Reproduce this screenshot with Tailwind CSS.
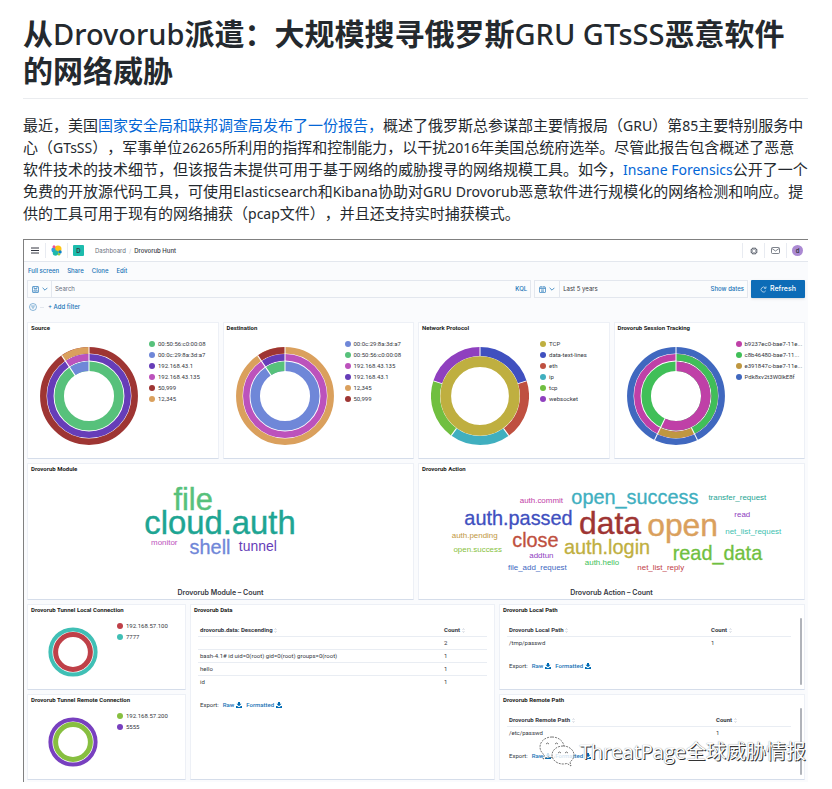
<!DOCTYPE html>
<html lang="zh-CN">
<head>
<meta charset="utf-8">
<meta name="viewport" content="width=device-width, initial-scale=1">
<title>从Drovorub派遣</title>
<script src="https://cdn.jsdelivr.net/npm/@tailwindcss/browser@4"></script>
</head>
<body class="bg-white pl-[23px] pr-6 pt-[15px] pb-2 text-[#24292e] font-['Noto_Sans','Noto_Sans_CJK_SC',sans-serif] [text-spacing-trim:space-all]">
<svg class="hidden" aria-hidden="true">
  <symbol id="dl" viewBox="0 0 12 12"><path d="M4 0h4v3.500h3L6 8.500 1 3.500h3z M0 8h2.500l2 2h3l2-2H12v4H0z" fill="#006bb4"/></symbol>
  <symbol id="sort" viewBox="0 0 6 10"><path d="M1 4l2-3 2 3M1 6l2 3 2-3" fill="none" stroke="#b5bccb"/></symbol>
  <symbol id="chev" viewBox="0 0 10 6"><path d="M1 1l4 4 4-4" fill="none" stroke="#3d87c0" stroke-width="1.500"/></symbol>
</svg>
<main>
<h1 class="border-b border-[#eaecef] pb-[9px] text-[30px] leading-[37px] font-bold [&_span]:leading-none">从<span class="font-medium text-[29px]">Drovorub</span>派遣：大规模搜寻俄罗斯<span class="font-medium text-[29px]">GRU GTsSS</span>恶意软件<br>的网络威胁</h1>
<p class="mt-[15px] text-[15px] leading-[22px] [&_span]:leading-none [&_a]:leading-none">最近，美国<a href="#" class="text-[#0366d6]">国家安全局和联邦调查局发布了一份报告，</a>概述了俄罗斯总参谋部主要情报局（<span class="text-[14px]">GRU</span>）第<span class="text-[14px]">85</span>主要特别服务中<br>心（<span class="text-[14px]">GTsSS</span>），军事单位<span class="text-[14px]">26265</span>所利用的指挥和控制能力，以干扰<span class="text-[14px]">2016</span>年美国总统府选举。尽管此报告包含概述了恶意<br>软件技术的技术细节，但该报告未提供可用于基于网络的威胁搜寻的网络规模工具。如今，<a href="#" class="text-[14px] text-[#0366d6]">Insane Forensics</a>公开了一个<br>免费的开放源代码工具，可使用<span class="text-[14px]">Elasticsearch</span>和<span class="text-[14px]">Kibana</span>协助对<span class="text-[14px]">GRU Drovorub</span>恶意软件进行规模化的网络检测和响应。提<br>供的工具可用于现有的网络捕获（<span class="text-[14px]">pcap</span>文件），并且还支持实时捕获模式。</p>

<section aria-label="Drovorub Hunt" class="relative mt-[15px] border-l border-t border-[#808080] bg-[#fafbfd] pb-[2px] font-['Inter',sans-serif] text-[6px] leading-[8px] text-[#343741]">
  <header class="flex h-[22px] items-center border-b border-[#e3e7ee] bg-white">
    <button aria-label="Menu" class="flex h-[15px] w-[22px] items-center justify-center border-r border-[#e8ebf1]"><svg class="h-[7px] w-[8px]" viewBox="0 0 8 7"><path d="M0 1h8M0 3.500h8M0 6h8" stroke="#343741" stroke-width="1"/></svg></button>
    <a href="#" aria-label="Elastic" class="flex h-[15px] w-[22px] items-center justify-center border-r border-[#e8ebf1]"><svg class="h-[11px] w-[11px]" viewBox="0 0 22 22"><circle cx="14" cy="8" r="7" fill="#fec514"/><path d="M1 10a4 4 0 0 1 5-5 5 5 0 0 1 3 6l-3 4a5 5 0 0 1-5-5z" fill="#2e9ee0"/><circle cx="6" cy="3.500" r="3" fill="#f04e98"/><circle cx="9" cy="16" r="5.500" fill="#1fb8ab"/><circle cx="18" cy="14" r="3.500" fill="#0a83cc"/><circle cx="16" cy="18.500" r="2.500" fill="#93c83e"/></svg></a>
    <span class="ml-[5px] flex h-[11px] w-[11px] items-center justify-center rounded-[1px] bg-[#1dbcad] font-semibold">D</span>
    <nav aria-label="Breadcrumb" class="ml-[11px] flex gap-[3px]"><a href="#" class="text-[#69707d]">Dashboard</a><span class="text-[#c5cad5]">/</span><span class="font-medium">Drovorub Hunt</span></nav>
    <div class="ml-auto flex">
      <button aria-label="Help" class="flex h-[15px] w-[22px] items-center justify-center border-l border-[#e8ebf1]"><svg class="h-[8px] w-[8px]" viewBox="0 0 16 16" fill="none" stroke="#535966" stroke-width="1.500"><circle cx="8" cy="8" r="6"/><path d="M5.500 1v3.500h5V1M5.500 15v-3.500h5V15M1 5.500h3.500v5H1M15 5.500h-3.500v5H15" stroke-width="1.200"/></svg></button>
      <button aria-label="News" class="flex h-[15px] w-[22px] items-center justify-center border-l border-[#e8ebf1]"><svg class="h-[7px] w-[9px]" viewBox="0 0 18 14" fill="none" stroke="#535966" stroke-width="1.500"><rect x="1" y="1" width="16" height="12" rx="2"/><path d="M2 3l7 5 7-5"/></svg></button>
      <button aria-label="Account" class="flex h-[15px] w-[22px] items-center justify-center border-l border-[#e8ebf1]"><span class="h-[11px] w-[11px] rounded-full bg-[#ab89d3] text-center leading-[11px] font-semibold">d</span></button>
    </div>
  </header>

  <nav aria-label="Dashboard actions" class="flex h-[18px] items-center gap-[8px] pl-[4px] font-medium text-[#1672b5]"><a href="#">Full screen</a><a href="#">Share</a><a href="#">Clone</a><a href="#">Edit</a></nav>

  <form class="flex h-[18px] gap-[3px] px-[3px]">
    <div class="flex grow-[505] basis-0 items-stretch border border-[#e3e7ee] bg-[#fbfcfd]">
      <button type="button" aria-label="Saved queries" class="flex w-[24px] items-center justify-center gap-[3px] border-r border-[#e3e7ee]"><svg class="h-[7px] w-[7px]" viewBox="0 0 14 14" fill="none" stroke="#3d87c0" stroke-width="1.500"><rect x="1" y="1" width="12" height="12" rx="1"/><path d="M4 1v4h6V1M4 13V8h6v5M6 10.500h2"/></svg><svg class="h-[4px] w-[6px]"><use href="#chev"/></svg></button>
      <input aria-label="Search" placeholder="Search" class="min-w-0 grow pl-[3px] placeholder:text-[#69707d] outline-none">
      <button type="button" class="px-[3px] font-medium text-[#1672b5]">KQL</button>
    </div>
    <div class="flex grow-[213] basis-0 items-stretch border border-[#e3e7ee] bg-[#fbfcfd]">
      <button type="button" aria-label="Quick ranges" class="flex w-[25px] items-center justify-center gap-[3px] border-r border-[#e3e7ee]"><svg class="h-[7px] w-[7px]" viewBox="0 0 14 14" fill="none" stroke="#3d87c0" stroke-width="1.500"><rect x="1" y="2" width="12" height="11" rx="1"/><path d="M1 5h12M4 0v3M10 0v3M4 8h6M4 10.500h6"/></svg><svg class="h-[4px] w-[6px]"><use href="#chev"/></svg></button>
      <button type="button" class="grow pl-[3px] text-left">Last 5 years</button>
      <button type="button" class="px-[3px] font-medium text-[#1672b5]">Show dates</button>
    </div>
    <button type="button" class="flex w-[54px] items-center justify-center gap-[3px] rounded-[1px] bg-[#0d6cb7] text-[7px] font-medium text-white shadow-sm"><svg class="h-[7px] w-[7px]" viewBox="0 0 14 14" fill="none" stroke="#cfe2f1" stroke-width="1.500"><path d="M11.500 9.500A5 5 0 1 1 11 4M8 4.500h4V1"/></svg>Refresh</button>
  </form>

  <div class="flex h-[18px] items-center pl-[5px] font-medium text-[#1672b5]">
    <button aria-label="Filter options"><svg class="h-[8px] w-[8px]" viewBox="0 0 16 16" fill="none" stroke="#3d87c0" stroke-width="1.200"><circle cx="8" cy="8" r="7"/><path d="M4 6h8M5.500 8.500h5M7 11h2"/></svg></button>
    <span class="ml-[3px] h-px w-[4px] bg-[#e3e7ee]"></span>
    <button class="ml-[4px]">+ Add filter</button>
  </div>

  <div class="flex flex-col gap-[4px] px-[3px] pt-[6px] font-['Roboto',sans-serif]">
    <div class="grid grid-cols-4 gap-[4px]">
      <article class="h-[137px] rounded-[1px] border border-[#edf0f6] border-b-[#d5ddea] bg-white pt-[1px]">
        <h2 class="pl-[3px] font-bold text-[#1a1c21]">Source</h2>
        <div class="flex gap-[11px] pl-[12px] pt-[11px]">
          <svg class="mt-[4px] h-[98px] w-[98px] shrink-0" viewBox="-49 -49 98 98" fill="none">
            <g transform="rotate(-90)"><circle r="45.700" stroke="#9e3533" stroke-width="6.500"/><circle r="38.700" stroke="#663db8" stroke-width="6.500"/><circle r="29.800" stroke="#57c17b" stroke-width="9.500"/></g>
            <g transform="rotate(-124)"><circle r="45.700" stroke="#daa05d" stroke-width="6.500" pathLength="360" stroke-dasharray="34 326"/><circle r="38.700" stroke="#bc52bc" stroke-width="6.500" pathLength="360" stroke-dasharray="34 326"/><circle r="29.800" stroke="#6f87d8" stroke-width="9.500" pathLength="360" stroke-dasharray="34 326"/></g>
            <path d="M0-24V-49" stroke="#fff"/><path d="M0-24V-49" stroke="#fff" transform="rotate(-34)"/>
          </svg>
          <ul class="leading-[11px] [&>li]:flex [&>li]:items-center [&>li]:gap-[3px] [&_i]:h-[6px] [&_i]:w-[6px] [&_i]:rounded-full [&>li]:whitespace-nowrap -mt-[5px]">
            <li><i class="bg-[#57c17b]"></i>00:50:56:c0:00:08</li><li><i class="bg-[#6f87d8]"></i>00:0c:29:8a:3d:a7</li><li><i class="bg-[#663db8]"></i>192.168.43.1</li><li><i class="bg-[#bc52bc]"></i>192.168.43.135</li><li><i class="bg-[#9e3533]"></i>50,999</li><li><i class="bg-[#daa05d]"></i>12,345</li>
          </ul>
        </div>
      </article>
      <article class="h-[137px] rounded-[1px] border border-[#edf0f6] border-b-[#d5ddea] bg-white pt-[1px]">
        <h2 class="pl-[3px] font-bold text-[#1a1c21]">Destination</h2>
        <div class="flex gap-[11px] pl-[12px] pt-[11px]">
          <svg class="mt-[4px] h-[98px] w-[98px] shrink-0" viewBox="-49 -49 98 98" fill="none">
            <g><circle r="45.700" stroke="#daa05d" stroke-width="6.500"/><circle r="38.700" stroke="#bc52bc" stroke-width="6.500"/><circle r="29.800" stroke="#6f87d8" stroke-width="9.500"/></g>
            <g transform="rotate(-124)"><circle r="45.700" stroke="#9e3533" stroke-width="6.500" pathLength="360" stroke-dasharray="34 326"/><circle r="38.700" stroke="#663db8" stroke-width="6.500" pathLength="360" stroke-dasharray="34 326"/><circle r="29.800" stroke="#57c17b" stroke-width="9.500" pathLength="360" stroke-dasharray="34 326"/></g>
            <path d="M0-24V-49" stroke="#fff"/><path d="M0-24V-49" stroke="#fff" transform="rotate(-34)"/>
          </svg>
          <ul class="leading-[11px] [&>li]:flex [&>li]:items-center [&>li]:gap-[3px] [&_i]:h-[6px] [&_i]:w-[6px] [&_i]:rounded-full [&>li]:whitespace-nowrap -mt-[5px]">
            <li><i class="bg-[#6f87d8]"></i>00:0c:29:8a:3d:a7</li><li><i class="bg-[#57c17b]"></i>00:50:56:c0:00:08</li><li><i class="bg-[#bc52bc]"></i>192.168.43.135</li><li><i class="bg-[#663db8]"></i>192.168.43.1</li><li><i class="bg-[#daa05d]"></i>12,345</li><li><i class="bg-[#9e3533]"></i>50,999</li>
          </ul>
        </div>
      </article>
      <article class="h-[137px] rounded-[1px] border border-[#edf0f6] border-b-[#d5ddea] bg-white pt-[1px]">
        <h2 class="pl-[3px] font-bold text-[#1a1c21]">Network Protocol</h2>
        <div class="flex gap-[11px] pl-[12px] pt-[11px]">
          <svg class="mt-[4px] h-[98px] w-[98px] shrink-0" viewBox="-49 -49 98 98" fill="none">
            <g stroke-width="9">
              <circle r="44.500" stroke="#4050bf" pathLength="360" stroke-dasharray="72 288" transform="rotate(-90)"/>
              <circle r="44.500" stroke="#bf5040" pathLength="360" stroke-dasharray="72 288" transform="rotate(-18)"/>
              <circle r="44.500" stroke="#40afbf" pathLength="360" stroke-dasharray="72 288" transform="rotate(54)"/>
              <circle r="44.500" stroke="#70bf40" pathLength="360" stroke-dasharray="72 288" transform="rotate(126)"/>
              <circle r="44.500" stroke="#8f40bf" pathLength="360" stroke-dasharray="72 288" transform="rotate(198)"/>
            </g>
            <circle r="34.300" stroke="#bfaf40" stroke-width="10.800"/>
            <g stroke="#fff"><path d="M0-40V-49"/><path d="M0-40V-49" transform="rotate(72)"/><path d="M0-40V-49" transform="rotate(144)"/><path d="M0-40V-49" transform="rotate(216)"/><path d="M0-40V-49" transform="rotate(288)"/></g>
          </svg>
          <ul class="leading-[11px] [&>li]:flex [&>li]:items-center [&>li]:gap-[3px] [&_i]:h-[6px] [&_i]:w-[6px] [&_i]:rounded-full [&>li]:whitespace-nowrap -mt-[5px]">
            <li><i class="bg-[#bfaf40]"></i>TCP</li><li><i class="bg-[#4050bf]"></i>data-text-lines</li><li><i class="bg-[#bf5040]"></i>eth</li><li><i class="bg-[#40afbf]"></i>ip</li><li><i class="bg-[#70bf40]"></i>tcp</li><li><i class="bg-[#8f40bf]"></i>websocket</li>
          </ul>
        </div>
      </article>
      <article class="h-[137px] rounded-[1px] border border-[#edf0f6] border-b-[#d5ddea] bg-white pt-[1px]">
        <h2 class="pl-[3px] font-bold text-[#1a1c21]">Drovorub Session Tracking</h2>
        <div class="flex gap-[11px] pl-[12px] pt-[11px]">
          <svg class="mt-[4px] h-[98px] w-[98px] shrink-0" viewBox="-49 -49 98 98" fill="none">
            <circle r="45.700" stroke="#4068bf" stroke-width="6.500"/>
            <circle r="38.700" stroke="#bf40a7" stroke-width="6.500"/>
            <circle r="38.700" stroke="#40bf58" stroke-width="6.500" pathLength="360" stroke-dasharray="154 206" transform="rotate(-90)"/>
            <circle r="38.700" stroke="#bf9740" stroke-width="6.500" pathLength="360" stroke-dasharray="52 308" transform="rotate(64)"/>
            <circle r="29.800" stroke="#40bf58" stroke-width="9.500"/>
            <circle r="29.800" stroke="#bf40a7" stroke-width="9.500" pathLength="360" stroke-dasharray="206 154" transform="rotate(-90)"/>
            <path d="M0-24V-49" stroke="#fff"/><path d="M0-35V-49" stroke="#fff" transform="rotate(154)"/><path d="M0-24V-49" stroke="#fff" transform="rotate(206)"/>
          </svg>
          <ul class="leading-[11px] [&>li]:flex [&>li]:items-center [&>li]:gap-[3px] [&_i]:h-[6px] [&_i]:w-[6px] [&_i]:rounded-full [&>li]:whitespace-nowrap -mt-[5px]">
            <li><i class="bg-[#bf40a7]"></i>b9237ec0-bae7-11e...</li><li><i class="bg-[#40bf58]"></i>c8b46480-bae7-11...</li><li><i class="bg-[#bf9740]"></i>e391847c-bae7-11e...</li><li><i class="bg-[#4068bf]"></i>Pdk8xv2t3W0lkE8f</li>
          </ul>
        </div>
      </article>
    </div>

    <div class="grid grid-cols-2 gap-[4px]">
      <article class="rounded-[1px] border border-[#edf0f6] border-b-[#d5ddea] bg-white pt-[1px] pb-[1px]">
        <h2 class="pl-[3px] font-bold text-[#1a1c21]">Drovorub Module</h2>
        <svg class="block h-auto w-full font-['Liberation_Sans',sans-serif]" viewBox="27 473 387 116" text-anchor="middle">
          <text x="193" y="510" font-size="31" fill="#57c17b" stroke="#57c17b" stroke-width=".4">file</text>
          <text x="220" y="534" font-size="33" fill="#1ea593" stroke="#1ea593" stroke-width=".4">cloud.auth</text>
          <text x="164" y="545" font-size="8" fill="#bc52bc">monitor</text>
          <text x="210" y="554" font-size="20" fill="#6f87d8" stroke="#6f87d8" stroke-width=".3">shell</text>
          <text x="258" y="551" font-size="14" fill="#663db8">tunnel</text>
        </svg>
        <p class="text-center font-['Inter',sans-serif] text-[7px] leading-[10px] font-semibold">Drovorub Module – Count</p>
      </article>
      <article class="rounded-[1px] border border-[#edf0f6] border-b-[#d5ddea] bg-white pt-[1px] pb-[1px]">
        <h2 class="pl-[3px] font-bold text-[#1a1c21]">Drovorub Action</h2>
        <svg class="block h-auto w-full font-['Liberation_Sans',sans-serif]" viewBox="418 473 387 116" text-anchor="middle">
          <g font-size="32" stroke-width=".4"><text x="610" y="534" fill="#9e3533" stroke="#9e3533">data</text><text x="683" y="536" fill="#daa05d" stroke="#daa05d">open</text></g>
          <g font-size="20" stroke-width=".3">
            <text x="635" y="504" fill="#40afbf" stroke="#40afbf">open_success</text><text x="518" y="525" fill="#4050bf" stroke="#4050bf">auth.passed</text>
            <text x="535" y="547" fill="#bf5040" stroke="#bf5040">close</text><text x="607" y="554" fill="#bfaf40" stroke="#bfaf40">auth.login</text><text x="718" y="560" fill="#70bf40" stroke="#70bf40">read_data</text>
          </g>
          <g font-size="8">
            <text x="738" y="500" fill="#1ea593">transfer_request</text><text x="541" y="503" fill="#bf40a7">auth.commit</text>
            <text x="743" y="517" fill="#8f40bf">read</text><text x="754" y="534" fill="#40bfb0">net_list_request</text>
            <text x="474" y="538" fill="#bf9740">auth.pending</text><text x="477" y="552" fill="#87bf40">open.success</text>
            <text x="541" y="558" fill="#8f40bf">addtun</text><text x="602" y="565" fill="#40bf58">auth.hello</text>
            <text x="537" y="571" fill="#4068bf">file_add_request</text><text x="661" y="571" fill="#bf4048">net_list_reply</text>
          </g>
        </svg>
        <p class="text-center font-['Inter',sans-serif] text-[7px] leading-[10px] font-semibold">Drovorub Action – Count</p>
      </article>
    </div>

    <div class="grid grid-cols-[159fr_305fr_306fr] gap-[4px]">
      <div class="flex flex-col gap-[4px]">
        <article class="h-[86px] rounded-[1px] border border-[#edf0f6] border-b-[#d5ddea] bg-white pt-[1px]">
          <h2 class="pl-[3px] font-bold text-[#1a1c21]">Drovorub Tunnel Local Connection</h2>
          <div class="flex gap-[19px] pl-[20px] pt-[11px]">
            <svg class="mt-[2px] h-[50px] w-[50px] shrink-0" viewBox="-25 -25 50 50" fill="none"><circle r="22.600" stroke="#40bfb5" stroke-width="4"/><circle r="17.400" stroke="#bf4048" stroke-width="5"/></svg>
            <ul class="leading-[11px] [&>li]:flex [&>li]:items-center [&>li]:gap-[3px] [&_i]:h-[6px] [&_i]:w-[6px] [&_i]:rounded-full [&>li]:whitespace-nowrap -mt-[5px]"><li><i class="bg-[#bf4048]"></i>192.168.57.100</li><li><i class="bg-[#40bfb5]"></i>7777</li></ul>
          </div>
        </article>
        <article class="h-[86px] rounded-[1px] border border-[#edf0f6] border-b-[#d5ddea] bg-white pt-[1px]">
          <h2 class="pl-[3px] font-bold text-[#1a1c21]">Drovorub Tunnel Remote Connection</h2>
          <div class="flex gap-[19px] pl-[20px] pt-[11px]">
            <svg class="mt-[2px] h-[50px] w-[50px] shrink-0" viewBox="-25 -25 50 50" fill="none"><circle r="22.600" stroke="#7840bf" stroke-width="4"/><circle r="17.400" stroke="#87bf40" stroke-width="5"/></svg>
            <ul class="leading-[11px] [&>li]:flex [&>li]:items-center [&>li]:gap-[3px] [&_i]:h-[6px] [&_i]:w-[6px] [&_i]:rounded-full [&>li]:whitespace-nowrap -mt-[5px]"><li><i class="bg-[#87bf40]"></i>192.168.57.200</li><li><i class="bg-[#7840bf]"></i>5555</li></ul>
          </div>
        </article>
      </div>
      <article class="rounded-[1px] border border-[#edf0f6] border-b-[#d5ddea] bg-white pt-[1px] pl-[7px] pr-[7px]">
        <h2 class="-ml-[4px] font-bold text-[#1a1c21]">Drovorub Data</h2>
        <table class="mt-[9px] w-full text-left [&_th]:h-[13px] [&_td]:h-[13px] [&_th]:p-0 [&_td]:p-0 [&_th]:pl-[2px] [&_td]:pl-[2px]">
          <thead><tr class="border-b border-[#e9edf3]"><th class="font-bold">drovorub.data: Descending <svg class="inline h-[5px] w-[3px]"><use href="#sort"/></svg></th><th class="w-[45px] font-bold">Count <svg class="inline h-[5px] w-[3px]"><use href="#sort"/></svg></th></tr></thead>
          <tbody><tr class="border-b border-[#e9edf3]"><td></td><td>2</td></tr><tr class="border-b border-[#e9edf3]"><td>bash-4.1# id uid=0(root) gid=0(root) groups=0(root)</td><td>1</td></tr><tr class="border-b border-[#e9edf3]"><td>hello</td><td>1</td></tr><tr><td>id</td><td>1</td></tr></tbody>
        </table>
        <p class="mt-[13px] flex gap-[4px] pl-[2px]">Export: <a href="#" class="flex items-center gap-[2px] font-medium text-[#1672b5]">Raw <svg class="h-[6px] w-[6px]"><use href="#dl"/></svg></a><a href="#" class="flex items-center gap-[2px] font-medium text-[#1672b5]">Formatted <svg class="h-[6px] w-[6px]"><use href="#dl"/></svg></a></p>
      </article>
      <div class="flex flex-col gap-[4px]">
        <article class="flex h-[86px] rounded-[1px] border border-[#edf0f6] border-b-[#d5ddea] bg-white pt-[1px] pl-[7px] pr-[2px]">
          <div class="grow">
            <h2 class="-ml-[4px] font-bold text-[#1a1c21]">Drovorub Local Path</h2>
            <table class="mt-[9px] w-full text-left [&_th]:h-[13px] [&_td]:h-[13px] [&_th]:p-0 [&_td]:p-0 [&_th]:pl-[2px] [&_td]:pl-[2px]">
              <thead><tr class="border-b border-[#e9edf3]"><th class="font-bold">Drovorub Local Path <svg class="inline h-[5px] w-[3px]"><use href="#sort"/></svg></th><th class="w-[82px] font-bold">Count <svg class="inline h-[5px] w-[3px]"><use href="#sort"/></svg></th></tr></thead>
              <tbody><tr><td>/tmp/passwd</td><td>1</td></tr></tbody>
            </table>
            <p class="mt-[13px] flex gap-[4px] pl-[2px]">Export: <a href="#" class="flex items-center gap-[2px] font-medium text-[#1672b5]">Raw <svg class="h-[6px] w-[6px]"><use href="#dl"/></svg></a><a href="#" class="flex items-center gap-[2px] font-medium text-[#1672b5]">Formatted <svg class="h-[6px] w-[6px]"><use href="#dl"/></svg></a></p>
          </div>
          <div class="mt-[12px] mb-[4px] ml-[9px] w-[2px] rounded-full bg-[#b0b3ba]"></div>
        </article>
        <article class="flex h-[86px] rounded-[1px] border border-[#edf0f6] border-b-[#d5ddea] bg-white pt-[1px] pl-[7px] pr-[2px]">
          <div class="grow">
            <h2 class="-ml-[4px] font-bold text-[#1a1c21]">Drovorub Remote Path</h2>
            <table class="mt-[9px] w-full text-left [&_th]:h-[13px] [&_td]:h-[13px] [&_th]:p-0 [&_td]:p-0 [&_th]:pl-[2px] [&_td]:pl-[2px]">
              <thead><tr class="border-b border-[#e9edf3]"><th class="font-bold">Drovorub Remote Path <svg class="inline h-[5px] w-[3px]"><use href="#sort"/></svg></th><th class="w-[77px] font-bold">Count <svg class="inline h-[5px] w-[3px]"><use href="#sort"/></svg></th></tr></thead>
              <tbody><tr><td>/etc/passwd</td><td>1</td></tr></tbody>
            </table>
            <p class="mt-[13px] flex gap-[4px] pl-[2px]">Export: <a href="#" class="flex items-center gap-[2px] font-medium text-[#1672b5]">Raw <svg class="h-[6px] w-[6px]"><use href="#dl"/></svg></a><a href="#" class="flex items-center gap-[2px] font-medium text-[#1672b5]">Formatted <svg class="h-[6px] w-[6px]"><use href="#dl"/></svg></a></p>
          </div>
          <div class="mt-[12px] mb-[4px] ml-[9px] w-[2px] rounded-full bg-[#b0b3ba]"></div>
        </article>
      </div>
    </div>
  </div>

  <div class="absolute right-[2px] bottom-[15px] flex items-center gap-[5px] whitespace-nowrap">
    <svg class="h-[31px] w-[36px]" viewBox="0 0 36 31" fill="#fff" fill-opacity=".8" stroke="#555" stroke-width=".8" stroke-dasharray="2 1"><path d="M13 1C6 1 1 5.500 1 11c0 3 1.500 6 4.500 8L4 23l5-2c2 .6 5 .6 7 0M13 1c6 0 11 3.500 12 9"/><path d="M24 10c-6 0-11 4-11 9s5 9 11 9c1.500 0 3-.2 4-.6l4 2.600-1-4c2.500-2 4-4 4-7 0-5-5-9-11-9z"/><g fill="none" stroke-dasharray="none"><path d="M7 8q1.500-2 3 0M16 8q1.500-2 3 0M19 17q1.500-2 3 0M26 17q1.500-2 3 0"/></g></svg>
    <span class="font-['Open_Sans','Noto_Sans_CJK_SC',sans-serif] text-[20px] leading-[28px] text-white [text-shadow:1px_1px_0_#333,0_0_1px_#777]">ThreatPage全球威胁情报</span>
  </div>
</section>
</main>
</body>
</html>
